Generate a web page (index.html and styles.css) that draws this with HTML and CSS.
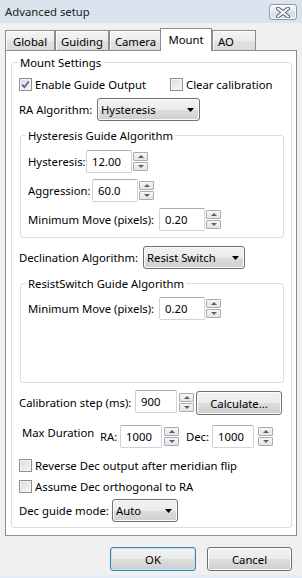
FILE: index.html
```html
<!DOCTYPE html>
<html>
<head>
<meta charset="utf-8">
<title>Advanced setup</title>
<link rel="stylesheet" href="styles.css">
</head>
<body>
<div class="window">
  <div class="titlebar">
    <span class="title">Advanced setup</span>
    <div class="close">
      <svg width="14" height="11" viewBox="0 0 14 11">
        <path d="M2 1.5 L12 9.5 M12 1.5 L2 9.5" stroke="#5b6470" stroke-width="4" stroke-linecap="round"/>
        <path d="M2 1.5 L12 9.5 M12 1.5 L2 9.5" stroke="#ffffff" stroke-width="2" stroke-linecap="round"/>
      </svg>
    </div>
  </div>
  <div class="client">
    <div class="tabs">
      <div class="tab w-global">Global</div>
      <div class="tab w-guiding">Guiding</div>
      <div class="tab w-camera">Camera</div>
      <div class="tab selected">Mount</div>
      <div class="tab w-ao">AO</div>
    </div>
    <div class="panel">
      <fieldset class="group main-group">
        <legend>Mount Settings</legend>

        <div class="row row-checks">
          <div class="check w-enable"><span class="box"><svg width="11" height="11" viewBox="0 0 11 11"><path d="M2.2 5.6 L4.4 8.2 L8.8 2.4" fill="none" stroke="#4a60a0" stroke-width="1.7"/></svg></span>Enable Guide Output</div>
          <div class="check"><span class="box"></span>Clear calibration</div>
        </div>

        <div class="row row-ra">
          <span class="lbl w-ra">RA Algorithm:</span>
          <div class="combo w-combo-ra"><span>Hysteresis</span><svg class="arrow" width="7" height="4" viewBox="0 0 7 4"><path d="M0 0 H7 L3.5 4 Z" fill="#000"/></svg></div>
        </div>

        <fieldset class="group sub-group hyst">
          <legend>Hysteresis Guide Algorithm</legend>
          <div class="row field first">
            <span class="lbl w-hyst">Hysteresis:</span>
            <div class="text w46">12.00</div>
            <div class="spin gap1"><span class="sb up"></span><span class="sb down"></span></div>
          </div>
          <div class="row field">
            <span class="lbl w-aggr">Aggression:</span>
            <div class="text w46">60.0</div>
            <div class="spin gap1"><span class="sb up"></span><span class="sb down"></span></div>
          </div>
          <div class="row field">
            <span class="lbl w-minmove">Minimum Move (pixels):</span>
            <div class="text w46">0.20</div>
            <div class="spin gap1"><span class="sb up"></span><span class="sb down"></span></div>
          </div>
        </fieldset>

        <div class="row row-dec">
          <span class="lbl w-dec">Declination Algorithm:</span>
          <div class="combo w-combo-dec"><span>Resist Switch</span><svg class="arrow" width="7" height="4" viewBox="0 0 7 4"><path d="M0 0 H7 L3.5 4 Z" fill="#000"/></svg></div>
        </div>

        <fieldset class="group sub-group resist">
          <legend>ResistSwitch Guide Algorithm</legend>
          <div class="row field first-r">
            <span class="lbl w-minmove">Minimum Move (pixels):</span>
            <div class="text w46">0.20</div>
            <div class="spin gap1"><span class="sb up"></span><span class="sb down"></span></div>
          </div>
        </fieldset>

        <div class="row row-cal">
          <span class="lbl w-cal">Calibration step (ms):</span>
          <div class="text w42">900</div>
          <div class="spin gap2"><span class="sb up"></span><span class="sb down"></span></div>
          <div class="btn calc">Calculate...</div>
        </div>

        <div class="row row-max">
          <span class="lbl w-max">Max Duration</span>
          <span class="lbl w-ralbl">RA:</span>
          <div class="text w42">1000</div>
          <div class="spin gap2"><span class="sb up"></span><span class="sb down"></span></div>
          <span class="lbl w-declbl">Dec:</span>
          <div class="text w42">1000</div>
          <div class="spin gap4"><span class="sb up"></span><span class="sb down"></span></div>
        </div>

        <div class="row check-row row-rev">
          <div class="check"><span class="box"></span>Reverse Dec output after meridian flip</div>
        </div>
        <div class="row check-row row-orth">
          <div class="check"><span class="box"></span>Assume Dec orthogonal to RA</div>
        </div>

        <div class="row row-mode">
          <span class="lbl w-mode">Dec guide mode:</span>
          <div class="combo w-combo-mode"><span>Auto</span><svg class="arrow" width="7" height="4" viewBox="0 0 7 4"><path d="M0 0 H7 L3.5 4 Z" fill="#000"/></svg></div>
        </div>
      </fieldset>
    </div>
    <div class="buttons">
      <div class="btn dlg default">OK</div>
      <div class="btn dlg cancel">Cancel</div>
    </div>
  </div>
  <div class="frame-bottom"></div>
</div>
</body>
</html>
```

FILE: styles.css
```css
* { box-sizing: border-box; }
html, body { margin: 0; padding: 0; }
body {
  width: 302px;
  height: 578px;
  overflow: hidden;
  background: #f0f0f0;
  font-family: "Noto Sans", "Open Sans", "DejaVu Sans", sans-serif;
  font-size: 11.3px;
  line-height: 15px;
  color: #000;
}
.window { display: flex; flex-direction: column; height: 578px; }

/* title bar */
.titlebar {
  height: 23px;
  flex: none;
  background: #dbe4ee;
  display: flex;
  justify-content: space-between;
  align-items: flex-start;
}
.title { margin: 4px 0 0 5px; font-size: 11.3px; color: #222; }
.close {
  width: 28px;
  height: 16px;
  margin: 4px 5px 0 0;
  border: 1px solid #8d97a6;
  border-radius: 3px;
  background: linear-gradient(#f4f6f9, #e3e8ef 50%, #d5dce6 51%, #dfe5ec);
  box-shadow: inset 0 0 0 1px rgba(255,255,255,0.7);
  display: flex;
  align-items: center;
  justify-content: center;
}

/* client area */
.client { flex: 1; padding: 5px 0 0 5px; display: flex; flex-direction: column; }

.tabs { display: flex; align-items: flex-end; height: 22px; }
.tab {
  height: 20px;
  border: 1px solid #898c95;
  border-bottom: none;
  background: linear-gradient(#f4f4f4, #ececec 50%, #e2e2e2 51%, #dadada);
  box-shadow: inset 1px 1px 0 #fcfcfc;
  text-align: center;
  line-height: 19px;
  padding-top: 1px;
}
.w-global { width: 50px; }
.w-guiding { width: 54px; }
.w-camera { width: 53px; }
.w-ao { width: 44px; text-align: left; padding-left: 5px; }
.tab.selected {
  width: 52px;
  height: 23px;
  margin-left: -2px;
  margin-bottom: -1px;
  background: #fff;
  box-shadow: none;
  position: relative;
  z-index: 1;
  line-height: 19px;
  padding-top: 1px;
}

.panel {
  width: 292px;
  height: 486px;
  border: 1px solid #898c95;
  background: #fff;
}

/* group boxes */
fieldset.group {
  border: 1px solid #d5dfe5;
  border-radius: 3px;
  margin: 0;
  padding: 0 0 0 7px;
  min-width: 0;
}
fieldset.group legend { padding: 0 2px; line-height: 15px; }
.main-group { margin: 4px 0 0 5px !important; width: 281px; height: 473px; }
.main-group > legend { margin-left: -1px; }
.sub-group { margin-left: 1px !important; width: 264px; }
.sub-group > legend { margin-left: -2px; }
.hyst { margin-top: 7px !important; height: 110px; }
.resist { margin-top: 7px !important; height: 107px; }

.row { display: flex; align-items: center; }
.lbl { flex: none; white-space: nowrap; }

.row-checks { margin-top: 7px; height: 15px; }
.check { display: flex; align-items: center; white-space: nowrap; height: 15px; }
.w-enable { width: 151px; }
.box {
  width: 13px;
  height: 13px;
  margin-right: 3px;
  border: 1px solid #8e8f8f;
  background: linear-gradient(135deg, #dadada, #f7f7f7);
  box-shadow: inset 0 0 0 1px #f4f4f4;
  display: flex;
  align-items: center;
  justify-content: center;
}
.box svg { display: block; }

.row-ra { margin-top: 6px; }
.w-ra { width: 78px; }
.combo {
  height: 23px;
  border: 1px solid #707070;
  border-radius: 3px;
  background: linear-gradient(#f2f2f2, #ebebeb 50%, #dddddd 51%, #cfcfcf);
  box-shadow: inset 0 0 0 1px #fafafa;
  display: flex;
  align-items: center;
  padding-left: 3px;
}
.combo .arrow { margin-left: auto; margin-right: 5px; }
.w-combo-ra { width: 103px; }
.w-combo-dec { width: 102px; }
.w-combo-mode { width: 66px; }

/* text fields & spinners */
.field { margin-top: 6px; }
.field.first { margin-top: 7px; }
.field.first-r { margin-top: 6px; }
.w-hyst { width: 58px; }
.w-aggr { width: 64px; }
.w-minmove { width: 131px; }
.text {
  height: 23px;
  border: 1px solid #d0d3d8;
  border-top-color: #abadb3;
  border-radius: 2px;
  background: #fff;
  padding-left: 5px;
  display: flex;
  align-items: center;
}
.w46 { width: 46px; }
.w42 { width: 42px; }
.spin { display: flex; flex-direction: column; gap: 1px; }
.gap1 { margin-left: 1px; }
.gap2 { margin-left: 2px; }
.gap4 { margin-left: 4px; }
.sb {
  width: 15px;
  height: 9px;
  border: 1px solid #acacac;
  border-radius: 1px;
  background: linear-gradient(#f6f6f6, #e4e4e4);
  display: flex;
  align-items: center;
  justify-content: center;
}
.sb::after {
  content: "";
  width: 0;
  height: 0;
  border-left: 3px solid transparent;
  border-right: 3px solid transparent;
}
.sb.up::after { border-bottom: 3px solid #4d6185; }
.sb.down::after { border-top: 3px solid #4d6185; }

.row-dec { margin-top: 8px; }
.w-dec { width: 124px; }

.row-cal { margin-top: 7px; align-items: flex-start; }
.w-cal { width: 116px; align-self: center; }
.row-cal .spin { align-self: center; }
.btn {
  border: 1px solid #707070;
  border-radius: 3px;
  background: linear-gradient(#f2f2f2, #ebebeb 50%, #dddddd 51%, #cfcfcf);
  box-shadow: inset 0 0 0 1px #fcfcfc;
  display: flex;
  align-items: center;
  justify-content: center;
}
.calc { width: 86px; height: 24px; margin: 1px 0 0 2px; }

.row-max { margin-top: 10px; }
.w-max { width: 78px; margin-left: 3px; align-self: flex-start; }
.w-ralbl { width: 20px; }
.w-declbl { width: 26px; margin-left: 7px; }

.check-row .check { height: 15px; }
.row-rev { margin-top: 10px; }
.row-orth { margin-top: 6px; }
.row-mode { margin-top: 5px; }
.w-mode { width: 93px; }

.buttons { display: flex; justify-content: flex-end; gap: 11px; margin: 11px 10px 0 0; }
.dlg { height: 24px; }
.default {
  width: 86px;
  border-color: #3c7fb1;
  box-shadow: inset 0 0 0 1px #bfe4f8;
}
.cancel { width: 85px; }

.frame-bottom { height: 3px; flex: none; background: #e3edf8; }
```
